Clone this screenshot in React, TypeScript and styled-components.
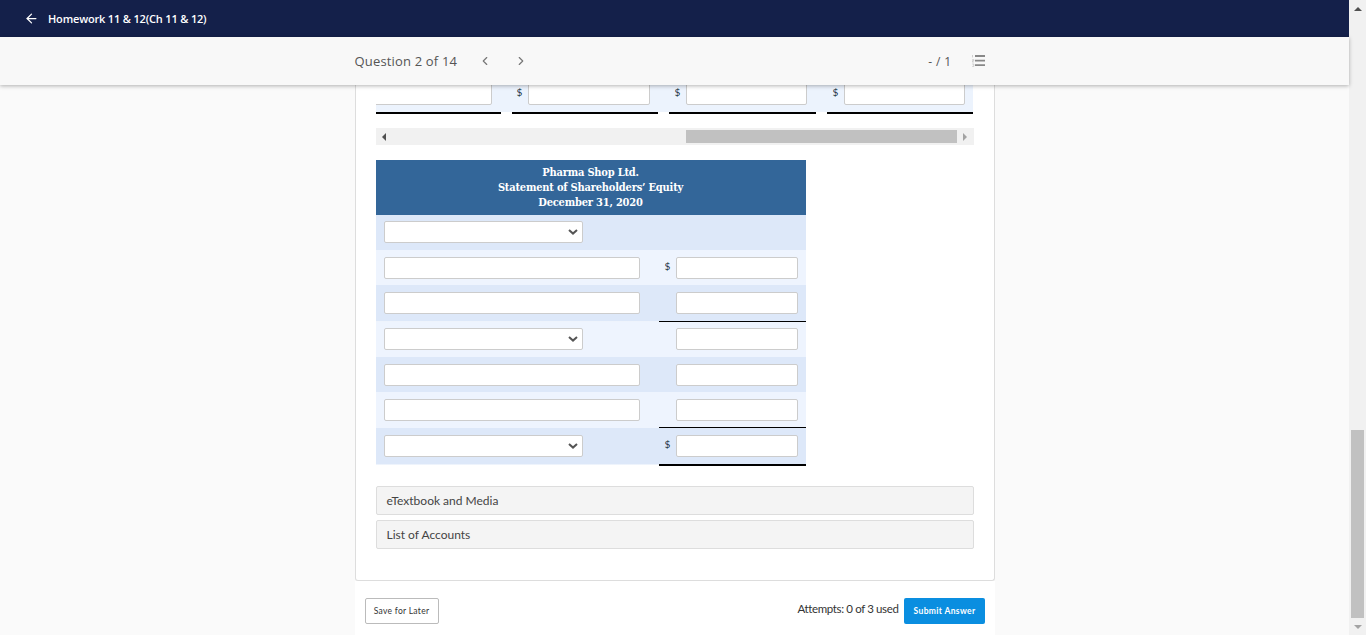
import React from "react";
import styled, { createGlobalStyle } from "styled-components";
import { ArrowLeft, ChevronLeft, ChevronRight } from "lucide-react";

const Global = createGlobalStyle`
  html, body { margin: 0; padding: 0; height: 100%; overflow: hidden; background: #fafafa; }
  * { box-sizing: border-box; }
`;
const Viewport = styled.div`display: flex; width: 1366px; height: 635px; overflow: hidden;`;
const Page = styled.div`flex: 1; min-width: 0; display: flex; flex-direction: column; font-family: "Open Sans", sans-serif;`;
const TopBar = styled.header`
  height: 37px; background: #14204a; color: #fff; display: flex; align-items: center; gap: 9px; padding-left: 24px;
  font-size: 11px; font-weight: 600; letter-spacing: -0.17px;
`;
const SubBar = styled.div`
  height: 48px; background: #f8f8f8; box-shadow: 0 1px 4px rgba(0,0,0,.3); position: relative; z-index: 2;
  display: flex; justify-content: center;
`;
const SubInner = styled.div`width: 640px; display: flex; align-items: center; color: #555; padding-right: 9px;`;
const QuestionLabel = styled.span`font-size: 13px; letter-spacing: .17px; width: 102px; white-space: nowrap;`;
const NavGroup = styled.div`display: flex; gap: 22px; margin-left: 21px; color: #777;`;
const Score = styled.span`margin-left: auto; margin-right: 20px; font-size: 12px; letter-spacing: .4px;`;
const Content = styled.main`flex: 1; min-height: 0; overflow: hidden; display: flex; flex-direction: column; align-items: center;`;
const Card = styled.section`
  width: 640px; height: 496px; background: #fff; border: 1px solid #ddd; border-top: 0; border-radius: 0 0 3px 3px; padding: 0 20px;
`;
const TopRow = styled.div`
  width: 597px; height: 29px; display: flex; justify-content: space-between;
  background: linear-gradient(#ecf3fd, #ecf3fd) no-repeat; background-size: 100% 27px;
`;
const TopCell = styled.div<{ $w: number; $pr: number }>`
  width: ${p => p.$w}px; height: 31px; overflow: hidden; border-bottom: 2px solid #000; display: flex; justify-content: flex-end; align-items: flex-start; gap: 4px; padding-right: ${p => p.$pr}px; margin-top: -2px;
`;
const Dollar = styled.span`font-family: Lato, sans-serif; font-size: 10px; line-height: 18px; color: #234; width: 8px; text-align: center;`;
const Field = styled.input<{ $w: number }>`
  flex: none; width: ${p => p.$w}px; height: 22px; border: 1px solid #ccc; border-radius: 2px; background: #fff; padding: 0; margin: 0; display: block; outline: 0;
`;
const chevron = `data:image/svg+xml,%3Csvg xmlns='http://www.w3.org/2000/svg' width='10' height='6' viewBox='0 0 10 6'%3E%3Cpath d='M1 1l4 3.6L9 1' fill='none' stroke='%23555' stroke-width='2'/%3E%3C/svg%3E`;
const Choice = styled.select`
  appearance: none; width: 199px; height: 22px; border: 1px solid #ccc; border-radius: 2px; margin: 0; display: block;
  background: #fff url("${chevron}") no-repeat right 4px center;
`;
const HScroll = styled.div`width: 598px; height: 17px; margin: 14px 0 15px; background: #f1f1f1; display: flex; align-items: center;`;
const HArrow = styled.div<{ $dir: "l" | "r"; $c: string }>`
  width: 17px; display: flex; justify-content: center;
  &::before {
    content: ""; border-style: solid; border-width: 4px 0 4px 4px; border-color: transparent transparent transparent ${p => p.$c};
    transform: ${p => p.$dir === "l" ? "scaleX(-1)" : "none"};
  }
`;
const HTrack = styled.div`flex: 1; display: flex; justify-content: flex-end;`;
const HThumb = styled.div`width: 271px; height: 13px; background: #c1c1c1;`;
const Statement = styled.div`width: 430px;`;
const Heading = styled.div`
  height: 55px; background: #336699; color: #fff; display: flex; flex-direction: column; align-items: center; justify-content: center;
  font-family: "DejaVu Serif Condensed", "DejaVu Serif", serif; font-stretch: condensed; font-weight: 700; font-size: 11px; line-height: 15px; letter-spacing: -0.2px;
`;
const Row = styled.div<{ $shade: boolean; $h: number }>`
  height: ${p => p.$h}px; display: flex; justify-content: space-between;
  background: linear-gradient(${p => p.$shade ? "#dde8f9" : "#eef4fe"}, ${p => p.$shade ? "#dde8f9" : "#eef4fe"}) no-repeat;
  background-size: 100% ${p => Math.min(p.$h, 36.5)}px;
`;
const LabelCell = styled.div<{ $top: number }>`padding: ${p => p.$top}px 0 0 8px;`;
const AmountCell = styled.div<{ $line?: number; $top: number }>`
  width: 147px; display: flex; align-items: flex-start; justify-content: flex-end; gap: 4px; padding: ${p => p.$top}px 8px 0 0;
  border-bottom: ${p => p.$line ? `${p.$line}px solid #000` : "0"};
`;
const Accordions = styled.div`margin-top: 20px; display: flex; flex-direction: column; gap: 5px; width: 598px;`;
const Accordion = styled.div`
  height: 29px; background: #f4f4f4; border: 1px solid #ddd; border-radius: 2px; display: flex; align-items: center; padding-left: 10px;
  font-family: Lato, sans-serif; font-size: 12px; color: #444;
`;
const Footer = styled.footer`
  width: 640px; flex: 1; background: #fff; display: flex; align-items: flex-start; padding: 17px 10px 0; font-family: Lato, sans-serif;
`;
const SaveButton = styled.button`
  width: 74px; height: 26px; background: #fff; border: 1px solid #bbb; border-radius: 2px; font-family: Lato, sans-serif; font-size: 8.5px; letter-spacing: .3px; color: #333; padding: 0;
`;
const Attempts = styled.span`margin-left: auto; margin-right: 5px; font-size: 11.5px; line-height: 22px; letter-spacing: -0.37px; color: #333;`;
const SubmitButton = styled.button`
  width: 81px; height: 26px; background: #0a8ee0; border: 0; border-radius: 2px; color: #fff; font-family: Lato, sans-serif; font-size: 8.5px; font-weight: 700; letter-spacing: .35px; padding: 0 0 0 1px;
`;
const VScroll = styled.aside`width: 17px; background: #f1f1f1; display: flex; flex-direction: column; align-items: center;`;
const VArrow = styled.div<{ $up?: boolean; $c: string }>`
  height: 17px; display: flex; align-items: center; justify-content: center;
  &::before {
    content: ""; border-style: solid; border-width: ${p => p.$up ? "0 4px 4px 4px" : "4px 4px 0 4px"};
    border-color: ${p => p.$up ? `transparent transparent ${p.$c} transparent` : `${p.$c} transparent transparent transparent`};
  }
`;
const VThumb = styled.div`width: 13px; height: 188px; margin-top: auto; background: #c1c1c1;`;

const ListIcon = () => (
  <svg width="14" height="12" viewBox="0 0 14 12" aria-hidden="true">
    <path d="M3 1h10M3 5.6h10M3 10.2h10" stroke="#888" strokeWidth="1.8" fill="none" />
    <path d="M0.5 0v2.4M.2 4.6h1.6v1.2H.2v1.2h1.6M.2 9h1.6v2.4H.2" stroke="#bbb" strokeWidth=".7" fill="none" />
  </svg>
);

type R = { kind: "select" | "text"; h: number; top: number; dollar?: boolean; amount?: boolean; line?: number };
const rows: R[] = [
  { kind: "select", h: 35, top: 6 },
  { kind: "text", h: 35, top: 7, dollar: true, amount: true },
  { kind: "text", h: 37, top: 7, amount: true, line: 1 },
  { kind: "select", h: 35, top: 6, amount: true },
  { kind: "text", h: 35, top: 7, amount: true },
  { kind: "text", h: 36, top: 7, amount: true, line: 1 },
  { kind: "select", h: 38, top: 7, dollar: true, amount: true, line: 2 },
];

export default function App() {
  return (
    <Viewport>
      <Global />
      <Page>
        <TopBar><ArrowLeft size={15} strokeWidth={2} /><span>Homework 11 &amp; 12(Ch 11 &amp; 12)</span></TopBar>
        <SubBar>
          <SubInner>
            <QuestionLabel>Question 2 of 14</QuestionLabel>
            <NavGroup><ChevronLeft size={14} /><ChevronRight size={14} /></NavGroup>
            <Score>- / 1</Score>
            <ListIcon />
          </SubInner>
        </SubBar>
        <Content>
          <Card>
            <TopRow>
              <TopCell $w={125} $pr={9}><Field $w={125} /></TopCell>
              <TopCell $w={146} $pr={8}><Dollar>$</Dollar><Field $w={122} /></TopCell>
              <TopCell $w={147} $pr={9}><Dollar>$</Dollar><Field $w={121} /></TopCell>
              <TopCell $w={146} $pr={8}><Dollar>$</Dollar><Field $w={121} /></TopCell>
            </TopRow>
            <HScroll>
              <HArrow $dir="l" $c="#505050" />
              <HTrack><HThumb /></HTrack>
              <HArrow $dir="r" $c="#a3a3a3" />
            </HScroll>
            <Statement>
              <Heading>
                <span>Pharma Shop Ltd.</span>
                <span>Statement of Shareholders’ Equity</span>
                <span>December 31, 2020</span>
              </Heading>
              {rows.map((r, i) => (
                <Row key={i} $shade={i % 2 === 0} $h={r.h}>
                  <LabelCell $top={r.top}>{r.kind === "select" ? <Choice /> : <Field $w={256} />}</LabelCell>
                  <AmountCell $line={r.line} $top={r.top}>
                    {r.dollar && <Dollar>$</Dollar>}
                    {r.amount && <Field $w={122} />}
                  </AmountCell>
                </Row>
              ))}
            </Statement>
            <Accordions>
              <Accordion>eTextbook and Media</Accordion>
              <Accordion>List of Accounts</Accordion>
            </Accordions>
          </Card>
          <Footer>
            <SaveButton>Save for Later</SaveButton>
            <Attempts>Attempts: 0 of 3 used</Attempts>
            <SubmitButton>Submit Answer</SubmitButton>
          </Footer>
        </Content>
      </Page>
      <VScroll>
        <VArrow $up $c="#505050" />
        <VThumb />
        <VArrow $c="#a3a3a3" />
      </VScroll>
    </Viewport>
  );
}
